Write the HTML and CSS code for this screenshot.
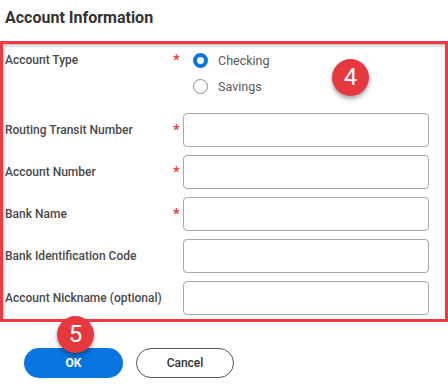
FILE: index.html
```html
<!DOCTYPE html>
<html>
  <head>
    <title>Account Information</title>
    <meta charset="utf-8" />
    <meta name="viewport" content="width=device-width, initial-scale=1.0" />
    <link rel="stylesheet" href="styles.css">
  </head>
  <body>
    <div class="dialog">
      <h1 class="dialog_title">Account Information</h1>

      <div class="form_box">
        <div class="form_row form_row_radio">
          <label class="form_label">Account Type</label>
          <span class="form_required">*</span>
          <div class="radio_group">
            <label class="radio_option">
              <span class="radio radio_checked"></span>
              Checking
            </label>
            <label class="radio_option">
              <span class="radio"></span>
              Savings
            </label>
          </div>
        </div>

        <div class="form_row">
          <label class="form_label">Routing Transit Number</label>
          <span class="form_required">*</span>
          <div class="text_input"></div>
        </div>
        <div class="form_row">
          <label class="form_label">Account Number</label>
          <span class="form_required">*</span>
          <div class="text_input"></div>
        </div>
        <div class="form_row">
          <label class="form_label">Bank Name</label>
          <span class="form_required">*</span>
          <div class="text_input"></div>
        </div>
        <div class="form_row">
          <label class="form_label">Bank Identification Code</label>
          <span class="form_required"></span>
          <div class="text_input"></div>
        </div>
        <div class="form_row">
          <label class="form_label">Account Nickname (optional)</label>
          <span class="form_required"></span>
          <div class="text_input"></div>
        </div>

        <span class="step_badge" id="badge_four">4</span>
      </div>

      <div class="button_bar">
        <button class="btn btn_primary">OK</button>
        <button class="btn btn_secondary">Cancel</button>
        <span class="step_badge" id="badge_five">5</span>
      </div>
    </div>
  </body>
</html>
```

FILE: styles.css
```css
body {
  margin: 0;
  padding: 0;
  background-color: #fff;
  font-family: Roboto, "Liberation Sans", Arial, sans-serif;
}

.dialog {
  width: 448px;
}

.dialog_title {
  margin: 0;
  padding: 8px 5px 14px;
  font-size: 16px;
  line-height: 19px;
  font-weight: 700;
  color: #333;
}

/* Red highlight frame round the form */
.form_box {
  position: relative;
  border: 3px solid #ee3b43;
  box-shadow: inset 1px 2px 3px rgba(0, 0, 0, 0.22);
  padding: 4px 16px 4px 2px;
  display: flex;
  flex-direction: column;
  gap: 8px;
}

.form_row {
  display: grid;
  grid-template-columns: 166px 12px 1fr;
  align-items: center;
  height: 34px;
}
.form_row_radio {
  height: auto;
  align-items: start;
  margin-bottom: 7px;
}

.form_label {
  font-size: 12px;
  font-weight: 500;
  color: #494949;
}
.form_row_radio .form_label,
.form_row_radio .form_required {
  line-height: 24px;
}

.form_required {
  color: #e8363d;
  font-size: 15px;
  font-weight: 500;
  padding-left: 2px;
}

.radio_group {
  display: flex;
  flex-direction: column;
  gap: 2px;
  padding-left: 10px;
}
.radio_option {
  display: flex;
  align-items: center;
  gap: 10px;
  height: 24px;
  font-size: 12.5px;
  color: #595959;
}
.radio {
  box-sizing: border-box;
  width: 15px;
  height: 15px;
  border-radius: 50%;
  border: 1px solid #8c8c8c;
}
.radio_checked {
  border: 4px solid #0875e1;
}

.text_input {
  box-sizing: border-box;
  height: 34px;
  border: 1px solid #a3a8ae;
  border-radius: 4px;
  background-color: #fff;
}

.button_bar {
  position: relative;
  display: flex;
  gap: 13px;
  padding: 26px 0 0 24px;
}
.btn {
  height: 30px;
  border-radius: 15px;
  font-family: Roboto, "Liberation Sans", Arial, sans-serif;
  font-size: 12px;
  cursor: pointer;
}
.btn_primary {
  width: 99px;
  border: 0;
  background-color: #0875e1;
  color: #fff;
  font-weight: 700;
}
.btn_secondary {
  width: 98px;
  border: 1px solid #555;
  background-color: #fff;
  color: #333;
  font-weight: 500;
}

.step_badge {
  position: absolute;
  width: 37px;
  height: 37px;
  border-radius: 50%;
  background-color: #e8383f;
  color: #fff;
  font-size: 24px;
  line-height: 37px;
  text-align: center;
  box-shadow: 0 3px 4px rgba(0, 0, 0, 0.35);
}
#badge_four {
  left: 329px;
  top: 15px;
}
#badge_five {
  left: 57px;
  top: -6px;
  z-index: 2;
}
```
